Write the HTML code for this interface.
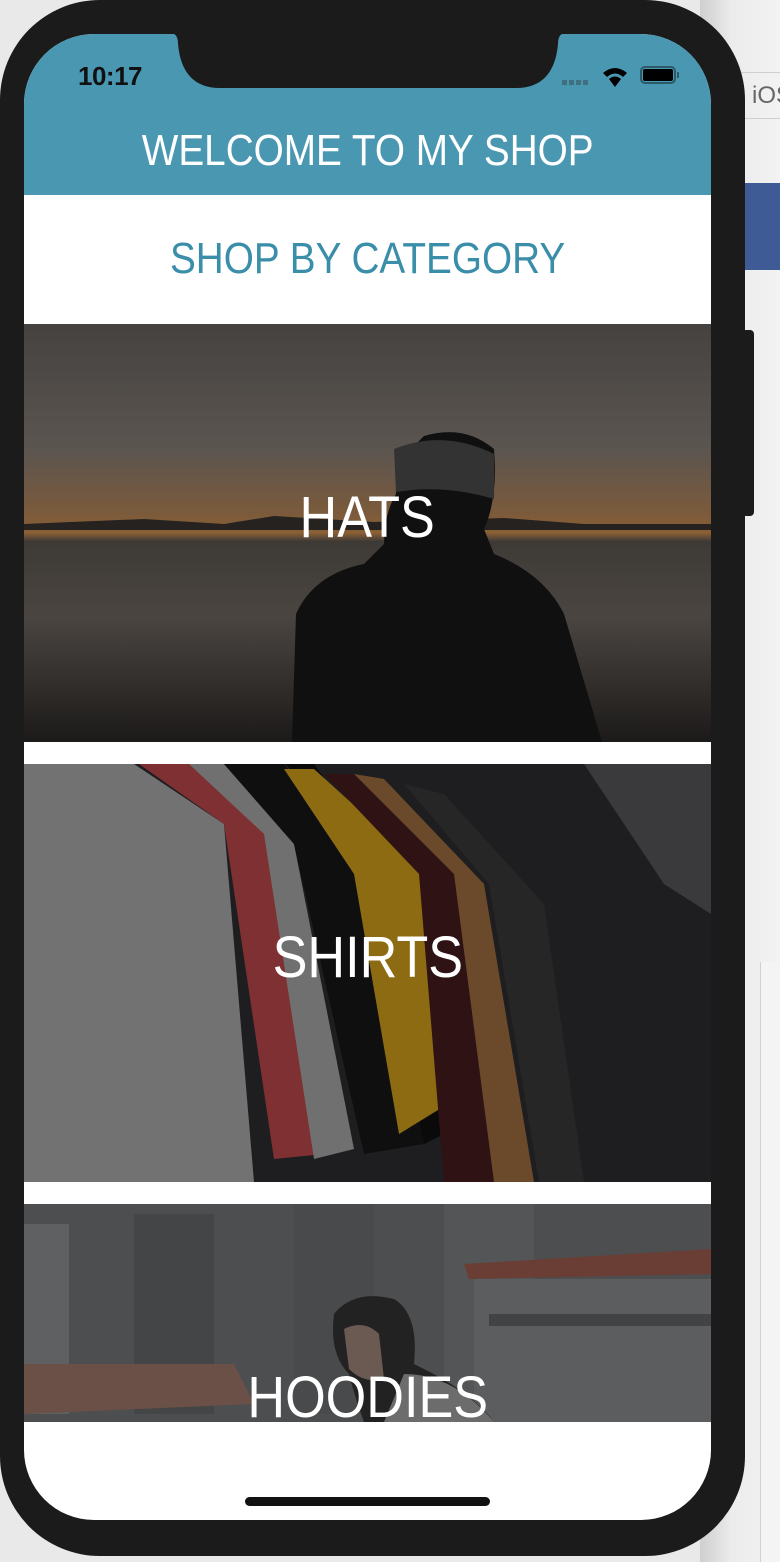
<!DOCTYPE html>
<html><head><meta charset="utf-8">
<style>
html,body{margin:0;padding:0;}
body{width:780px;height:1562px;position:relative;overflow:hidden;background:#e9e9e9;font-family:"Liberation Sans",sans-serif;}
.abs{position:absolute;}
.t{position:absolute;left:0;width:687px;text-align:center;color:#fff;white-space:nowrap;}
.t span{display:inline-block;transform:scaleX(.88);}
.big span{transform:scaleX(.9);}
</style></head><body>
<div class="abs" style="left:700px;top:0;width:80px;height:1562px;background:linear-gradient(90deg,#cfcfcf,#ececec 40%,#f2f2f2)"></div>
<div class="abs" style="left:740px;top:72px;width:40px;height:1px;background:#cfcfcf"></div>
<div class="abs" style="left:740px;top:118px;width:40px;height:1px;background:#cfcfcf"></div>
<div class="abs" style="left:752px;top:82px;font-size:24px;color:#666">iOS</div>
<div class="abs" style="left:745px;top:183px;width:35px;height:87px;background:#3f5b96"></div>
<div class="abs" style="left:760px;top:962px;width:20px;height:600px;background:#f4f4f4;border-left:1px solid #d0d0d0"></div>
<div class="abs" style="left:0;top:0;width:745px;height:1556px;background:#1b1b1b;border-radius:100px"></div>
<div class="abs" style="left:742px;top:330px;width:12px;height:186px;background:#1b1b1b;border-radius:4px"></div>
<div class="abs" style="left:24px;top:34px;width:687px;height:1486px;background:#fff;border-radius:70px;overflow:hidden">
  <div class="abs" style="left:0;top:0;width:687px;height:161px;background:#4a97b2"></div>
  <div class="abs" style="left:54px;top:27px;font-size:26px;font-weight:bold;color:#111;letter-spacing:-0.5px">10:17</div>
  <div class="abs" style="left:538px;top:46px;width:28px;height:5px;background:repeating-linear-gradient(90deg,#3f6f80 0 5px,transparent 5px 7px)"></div>
  <svg class="abs" style="left:578px;top:32px" width="26" height="22" viewBox="0 0 26 22"><path d="M1 7 Q13 -3 25 7 L21 11 Q13 4 5 11Z" fill="#000"/><path d="M7 13 Q13 8 19 13 L13 21Z" fill="#000"/></svg>
  <div class="abs" style="left:616px;top:32px;width:36px;height:18px;border:2px solid #2d5a6a;border-radius:5px;box-sizing:border-box"></div>
  <div class="abs" style="left:619px;top:35px;width:30px;height:12px;background:#000;border-radius:2px"></div>
  <div class="abs" style="left:653px;top:38px;width:2px;height:6px;background:#2d5a6a"></div>
  <div class="t" style="top:92px;font-size:44px;line-height:50px"><span>WELCOME TO MY SHOP</span></div>
  <div class="t" style="top:200px;font-size:44px;line-height:50px;color:#3a8ea9"><span>SHOP BY CATEGORY</span></div>

  <svg class="abs" style="left:0;top:290px" width="687" height="418" viewBox="0 0 687 418">
    <defs><linearGradient id="sky" x1="0" y1="0" x2="0" y2="1">
      <stop offset="0" stop-color="#454240"/><stop offset=".3" stop-color="#5b5550"/><stop offset=".45" stop-color="#7a5a3c"/><stop offset=".5" stop-color="#8a5f35"/><stop offset=".52" stop-color="#3e3a36"/><stop offset=".7" stop-color="#4a4541"/><stop offset="1" stop-color="#1c1a19"/></linearGradient></defs>
    <rect width="687" height="418" fill="url(#sky)"/>
    <path d="M0 200 L120 195 L200 200 L250 192 L350 198 L480 194 L560 200 L687 200 L687 206 L0 206Z" fill="#252220"/>
    <path d="M268 418 L272 290 Q290 250 340 240 L360 220 Q360 190 372 170 Q370 140 400 112 Q440 100 470 125 Q474 175 460 205 L470 230 Q520 250 540 290 L578 418Z" fill="#101010"/>
    <path d="M370 125 Q420 105 470 130 L470 175 Q420 160 372 168Z" fill="#333"/>
  </svg>
  <div class="t big" style="top:452px;font-size:58px;line-height:64px"><span>HATS</span></div>

  <svg class="abs" style="left:0;top:730px" width="687" height="418" viewBox="0 0 687 418">
    <rect width="687" height="418" fill="#1e1e20"/>
    <path d="M0 0 L110 0 L200 60 L230 418 L0 418Z" fill="#727272"/>
    <path d="M115 0 L170 0 L240 70 L300 390 L250 395 L200 60Z" fill="#7e3032"/>
    <path d="M165 0 L200 0 L270 80 L330 385 L290 395 L240 70Z" fill="#707070"/>
    <path d="M200 0 L260 0 L340 100 L400 380 L340 390 L270 80Z" fill="#0f0f10"/>
    <path d="M262 0 L290 0 L370 110 L440 360 L400 380 L340 100Z" fill="#0a0a0a"/>
    <path d="M260 5 L290 5 L395 100 L440 330 L375 370 L330 110Z" fill="#8d6b12"/>
    <path d="M300 10 L330 10 L430 110 L470 418 L420 418 L395 110Z" fill="#2e1214"/>
    <path d="M330 10 L360 15 L460 120 L510 418 L470 418 L430 110Z" fill="#6a4a2a"/>
    <path d="M380 20 L420 30 L520 140 L560 418 L515 418 L465 120Z" fill="#262626"/>
    <path d="M560 0 L687 0 L687 150 L640 120Z" fill="#3a3a3c"/>
  </svg>
  <div class="t big" style="top:892px;font-size:58px;line-height:64px"><span>SHIRTS</span></div>

  <svg class="abs" style="left:0;top:1170px" width="687" height="218" viewBox="0 0 687 218">
    <rect width="687" height="218" fill="#4c4e50"/>
    <rect x="0" y="20" width="45" height="190" fill="#5f6061"/>
    <rect x="110" y="10" width="80" height="200" fill="#434546"/>
    <rect x="270" y="0" width="80" height="210" fill="#484a4c"/>
    <rect x="420" y="0" width="90" height="200" fill="#535557"/>
    <path d="M0 160 L210 160 L230 200 L0 210Z" fill="#6b5048"/>
    <path d="M440 60 L687 45 L687 70 L445 75Z" fill="#6a3e34"/>
    <rect x="450" y="75" width="237" height="143" fill="#5c5d5e"/>
    <rect x="465" y="110" width="222" height="12" fill="#424344"/>
    <path d="M310 110 Q330 85 370 95 Q395 110 390 160 L400 165 Q450 190 470 218 L340 218 Q330 190 325 170 Q305 150 310 110Z" fill="#222"/>
    <path d="M320 125 Q340 115 355 130 L360 175 Q340 180 325 165Z" fill="#6a5a52"/>
    <path d="M380 170 Q430 170 470 218 L360 218Z" fill="#6c6c6c"/>
  </svg>
  <div class="t big" style="top:1332px;font-size:58px;line-height:64px"><span>HOODIES</span></div>

  <div class="abs" style="left:221px;top:1463px;width:245px;height:9px;background:#111;border-radius:5px"></div>
</div>
<svg class="abs" style="left:170px;top:30px" width="396" height="60" viewBox="0 0 396 60">
  <path d="M0 0 L4 4 Q8 6 8 14 Q12 58 50 58 L346 58 Q384 58 388 14 Q388 6 392 4 L396 0Z" fill="#1b1b1b"/>
</svg>
</body></html>
